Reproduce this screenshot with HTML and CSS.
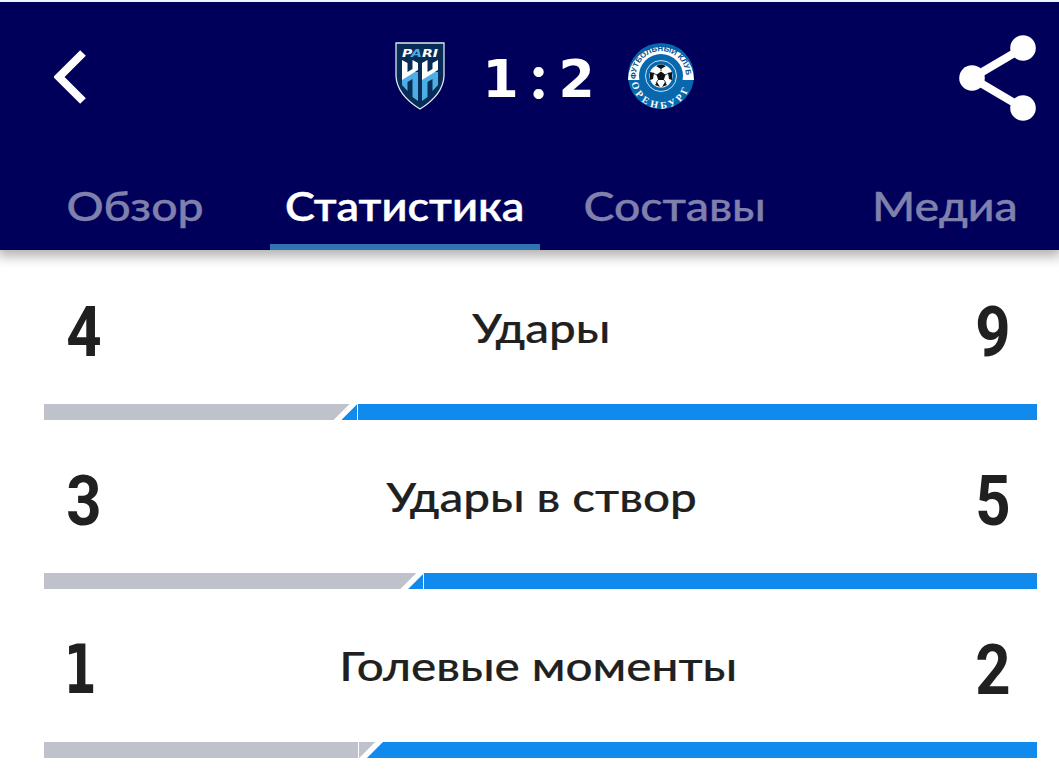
FILE: index.html
```html
<!DOCTYPE html>
<html lang="ru">
<head>
    <meta charset="UTF-8">
    <meta name="viewport" content="width=device-width, initial-scale=1.0">
    <title>Статистика матча</title>
    <link rel="stylesheet" href="styles.css">
</head>
<body>
    <header>
        <div class="topo">
            <svg class="voltar" viewBox="0 0 34 54">
                <path d="M29 3 L5 27 L29 51" fill="none" stroke="#fff" stroke-width="8"/>
            </svg>
            <div class="placar">
                <svg class="escudo" viewBox="0 0 50 68">
                    <path d="M1 1 H49 V34 Q48 53 25 67 Q2 53 1 34 Z" fill="#092c56" stroke="#dce9f2" stroke-width="1.3"/>
                    <path d="M7 30 H23 V59 L17.5 55 V37 L12.5 40 V49 L7 43 Z" fill="#4daee6"/>
                    <path d="M27 30 H43 V43 L37.5 49 V37 L32.5 40 V55 L27 59 Z" fill="#4daee6"/>
                    <path d="M7 18 L12.5 21 V30 L17.5 27 V18 L23 21 V28 L7 38 Z" fill="#fff"/>
                    <path d="M27 21 L32.5 18 V30 L37.5 27 V21 L43 18 V28 L27 38 Z" fill="#fff"/>
                    <text class="pari" x="7" y="15" textLength="36" lengthAdjust="spacingAndGlyphs">P<tspan fill="#4daee6">A</tspan>RI</text>
                </svg>
                <div class="gols"><span>1</span><span class="pontos">:</span><span>2</span></div>
                <svg class="escudo2" viewBox="0 0 68 68">
                    <defs>
                        <path id="arcoCima" d="M9.3 38 A25 25 0 1 1 58.7 38"/>
                        <path id="arcoBaixo" d="M4.5 37 A29.5 29.5 0 0 0 63.5 37"/>
                    </defs>
                    <circle cx="34" cy="34" r="33" fill="#0868ae"/>
                    <path d="M1 38 A33 33 0 1 1 67 38 Z" fill="#fff"/>
                    <circle cx="34" cy="34" r="22" fill="#0868ae"/>
                    <circle cx="34" cy="34" r="15.5" fill="none" stroke="#c8e2f2" stroke-width="1"/>
                    <circle cx="34" cy="34" r="11.5" fill="#fff"/>
                    <path d="M34 29.5 L38.5 32.8 L36.8 38 H31.2 L29.5 32.8 Z M29 24 Q34 21 39 24 L34 27 Z M23 30 L27 31 L26 37 L23 38 Z M45 30 L41 31 L42 37 L45 38 Z M28 43 L30 40 L33 45 Z M40 43 L38 40 L35 45 Z" fill="#111"/>
                    <path d="M34 29 V26 M38 33 L42 31 M37 38 L39 41 M31 38 L29 41 M30 33 L26 31" stroke="#111" stroke-width=".8"/>
                    <text class="clube"><textPath href="#arcoCima" startOffset="1">ФУТБОЛЬНЫЙ КЛУБ</textPath></text>
                    <text class="cidade"><textPath href="#arcoBaixo" startOffset="4">ОРЕНБУРГ</textPath></text>
                </svg>
            </div>
            <svg class="compartilhar" viewBox="0 0 78 86">
                <path d="M64 13 L13 43 L64 73" fill="none" stroke="#fff" stroke-width="8"/>
                <circle cx="64" cy="13" r="12.8" fill="#fff"/>
                <circle cx="13" cy="43" r="12.8" fill="#fff"/>
                <circle cx="64" cy="73" r="12.8" fill="#fff"/>
            </svg>
        </div>
        <nav>
            <a class="aba"><span>Обзор</span></a>
            <a class="aba ativa"><span>Статистика</span></a>
            <a class="aba"><span>Составы</span></a>
            <a class="aba"><span>Медиа</span></a>
        </nav>
    </header>
    <main>
        <section class="linha">
            <div class="valores">
                <strong>4</strong>
                <h2>Удары</h2>
                <strong>9</strong>
            </div>
            <div class="barra">
                <div class="casa" style="width: 30.77%"></div>
                <div class="fora emenda"></div>
            </div>
        </section>
        <section class="linha">
            <div class="valores">
                <strong>3</strong>
                <h2>Удары в створ</h2>
                <strong>5</strong>
            </div>
            <div class="barra">
                <div class="casa" style="width: 37.5%"></div>
                <div class="fora emenda"></div>
            </div>
        </section>
        <section class="linha">
            <div class="valores">
                <strong class="um">1</strong>
                <h2 class="momenty">Голевые моменты</h2>
                <strong>2</strong>
            </div>
            <div class="barra">
                <div class="casa emenda" style="width: 33.33%"></div>
                <div class="fora"></div>
            </div>
        </section>
    </main>
</body>
</html>
```
FILE: styles.css
```css
* {
    padding: 0px;
    margin: 0px;
    box-sizing: border-box;
}
:root {
    --azul: #00005a;
    --azul2: #108bed;
    --cinza: #bfc2ca;
    --texto: #202020;
}
body {
    height: 769px;
    overflow: hidden;
    background-color: #fff;
    font-family: Lato, "Noto Sans", sans-serif;
}
header {
    height: 250px;
    background-color: var(--azul);
    border-top: 2px solid #edf4fa;
    box-shadow: 0px 3px 12px 3px rgba(0, 0, 0, 0.32);
}
.topo {
    height: 151px;
    padding: 0px 22px 0px 54px;
    display: flex;
    justify-content: space-between;
    align-items: center;
}
.voltar {
    width: 34px;
    height: 54px;
    margin-bottom: 2px;
}
.placar {
    display: flex;
    align-items: center;
    margin-left: 43px;
    padding-bottom: 4px;
}
.escudo {
    width: 50px;
    height: 68px;
}
.pari {
    font: italic bold 11px "DejaVu Sans", sans-serif;
    fill: #fff;
}
.gols {
    width: 182px;
    padding: 7px 0px 0px 5px;
    display: flex;
    justify-content: center;
    align-items: center;
    font: bold 52px/60px "DejaVu Sans", sans-serif;
    color: #fff;
}
.gols span {
    width: 38px;
    text-align: center;
}
.gols .pontos {
    padding-bottom: 8px;
    font-family: Lato, sans-serif;
    font-size: 62px;
    font-weight: 900;
}
.escudo2 {
    width: 68px;
    height: 68px;
    overflow: visible;
}
.clube {
    font: bold 7.8px "Liberation Sans", sans-serif;
    fill: #07508f;
}
.cidade {
    font: bold 10px "Liberation Serif", serif;
    letter-spacing: 3.4px;
    fill: #fff;
}
.compartilhar {
    width: 78px;
    height: 86px;
}
nav {
    width: 1080px;
    height: 97px;
    display: flex;
}
.aba {
    width: 270px;
    padding-top: 27px;
    text-align: center;
    font-size: 40px;
    line-height: 52px;
    font-weight: 500;
    color: #8080ad;
    -webkit-text-stroke: 0.4px;
}
.aba span {
    display: inline-block;
    transform: scaleX(1.16);
}
.ativa {
    font-weight: 600;
    color: #fff;
    border-bottom: 6px solid #3274b2;
}
.ativa span {
    transform: scaleX(1.122);
}
.linha {
    height: 169px;
    padding: 0px 22px 0px 44px;
}
.linha:first-child {
    height: 170px;
    padding-top: 1px;
}
.valores {
    height: 153px;
    padding: 0px 25px 0px 21px;
    display: flex;
    justify-content: space-between;
    align-items: center;
    color: var(--texto);
}
.valores strong {
    width: 38px;
    font: bold 70px/80px Roboto, sans-serif;
    text-align: center;
    transform: translate(-1px, 4px) scaleX(0.88);
}
.valores .um {
    font: bold 67px/80px "DejaVu Sans", sans-serif;
    transform: translate(-7px, 4px) scaleX(0.7);
}
h2 {
    margin-left: 5px;
    font-size: 40px;
    font-weight: 500;
    white-space: nowrap;
    transform: scaleX(1.19);
    -webkit-text-stroke: 0.2px;
}
.momenty {
    margin-left: -1px;
}
.barra {
    height: 16px;
    display: flex;
}
.casa {
    background-color: var(--cinza);
    clip-path: polygon(0 0, 100% 0, calc(100% - 16px) 100%, 0 100%);
}
.fora {
    flex: 1;
    margin-left: -8px;
    background-color: var(--azul2);
    clip-path: polygon(16px 0, 100% 0, 100% 100%, 0 100%);
}
.fora.emenda {
    border-left: 15.5px solid var(--azul2);
    background-image: linear-gradient(to right, #fff 1px, transparent 1px);
}
.casa.emenda {
    border-right: 16px solid var(--cinza);
    background-image: linear-gradient(to left, #fff 1px, transparent 1px);
}
```
